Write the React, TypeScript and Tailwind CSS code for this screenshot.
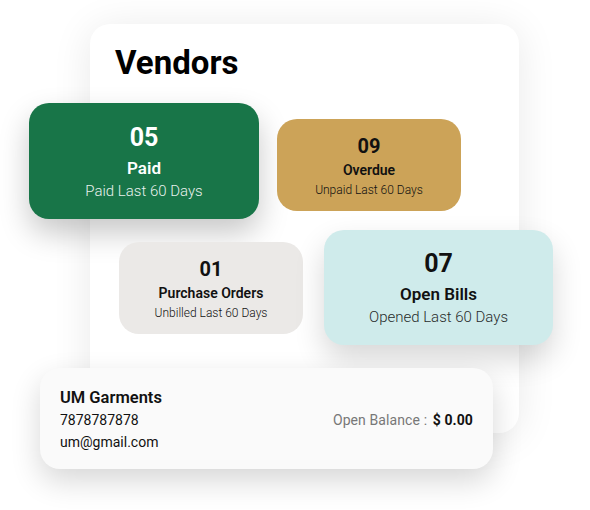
import React from 'react'

type Stat = {
  count: string
  title: string
  sub: string
  box: string
  size: 'lg' | 'sm'
  tone: string
}

const STATS: Stat[] = [
  { count: '05', title: 'Paid', sub: 'Paid Last 60 Days', box: 'left-[29px] top-[103px] w-[230px] h-[116px] bg-[#187548] shadow-[0_14px_30px_rgba(0,0,0,0.22)]', size: 'lg', tone: 'text-white' },
  { count: '09', title: 'Overdue', sub: 'Unpaid Last 60 Days', box: 'left-[277px] top-[119px] w-[184px] h-[92px] bg-[#cca358]', size: 'sm', tone: 'text-[#111]' },
  { count: '01', title: 'Purchase Orders', sub: 'Unbilled Last 60 Days', box: 'left-[119px] top-[242px] w-[184px] h-[92px] bg-[#ebe9e7]', size: 'sm', tone: 'text-[#111]' },
  { count: '07', title: 'Open Bills', sub: 'Opened Last 60 Days', box: 'left-[324px] top-[230px] w-[229px] h-[115px] bg-[#cfebeb] shadow-[0_14px_30px_rgba(0,0,0,0.16)]', size: 'lg', tone: 'text-[#111]' },
]

function StatCard({ s }: { s: Stat }) {
  const lg = s.size === 'lg'
  return (
    <div className={`absolute ${s.box} rounded-[20px] flex flex-col items-center justify-center ${s.tone}`}>
      <div className={lg ? 'text-[25px] font-bold leading-[30px] mt-[1px]' : 'text-[20px] font-bold leading-[24px] mt-[2px]'}>{s.count}</div>
      <div className={lg ? 'text-[17px] font-semibold leading-[22px] mt-[4px]' : 'text-[14px] font-semibold leading-[18px] mt-[3px]'}>{s.title}</div>
      <div className={lg ? 'text-[15px] font-light leading-[20px] mt-[2px] opacity-90' : 'text-[12px] font-light leading-[16px] mt-[3px]'}>{s.sub}</div>
    </div>
  )
}

export default function App() {
  return (
    <div className="relative w-[590px] h-[510px] bg-white overflow-hidden" style={{ fontFamily: 'Roboto, "Liberation Sans", sans-serif' }}>
      {/* Main panel */}
      <div className="absolute left-[90px] top-[24px] w-[429px] h-[409px] bg-white rounded-[20px] shadow-[0_4px_40px_rgba(0,0,0,0.09)]">
        <h1 className="pl-[25px] pt-[19px] text-[33px] font-bold text-black leading-[40px]">Vendors</h1>
      </div>

      {STATS.map(s => <StatCard key={s.title} s={s} />)}

      {/* Vendor row */}
      <div className="absolute left-[40px] top-[368px] w-[453px] h-[101px] bg-[#fafafa] rounded-[20px] shadow-[0_12px_30px_rgba(0,0,0,0.16)] flex items-center justify-between pl-[20px] pr-[20px]">
        <div className="flex flex-col text-[#111] mt-[3px]">
          <div className="text-[16.5px] font-semibold leading-[22px]">UM Garments</div>
          <div className="text-[14px] leading-[22px]">7878787878</div>
          <div className="text-[14px] leading-[22px]">um@gmail.com</div>
        </div>
        <div className="text-[14px] text-[#777] leading-[20px] mt-[2px] tracking-[0.1px]">
          Open Balance : <span className="font-bold text-[#111] ml-[2px]">$ 0.00</span>
        </div>
      </div>
    </div>
  )
}
